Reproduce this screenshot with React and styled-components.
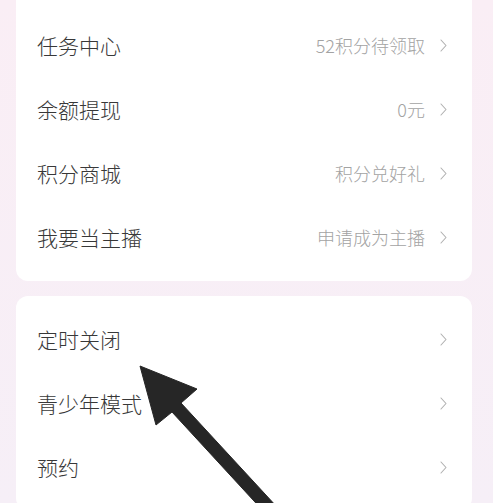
import styled, { createGlobalStyle } from "styled-components";

const Global = createGlobalStyle`
  html, body {
    margin: 0;
    padding: 0;
    height: 100%;
    overflow: hidden;
  }
  body {
    background: linear-gradient(180deg, #faeef5 0%, #f6eff7 100%);
    font-family: "Noto Sans CJK SC", "Noto Sans", sans-serif;
  }
`;

const Screen = styled.div`
  position: relative;
  height: 503px;
  padding: 0 21px 0 16px;
  display: flex;
  flex-direction: column;
  gap: 15px;
`;

const Card = styled.div`
  background: #fff;
  border-radius: 12px;
  padding: ${(p) => (p.$scrolled ? "33px" : "11px")} 0 ${(p) => (p.$scrolled ? "12px" : "11px")};
  margin-top: ${(p) => (p.$scrolled ? "-20px" : "0")};
  display: flex;
  flex-direction: column;
`;

const Row = styled.div`
  height: 64px;
  display: flex;
  align-items: center;
  padding: 0 25px 0 21px;
  cursor: pointer;
`;

const Label = styled.div`
  flex: 1;
  font-size: 21px;
  font-weight: 300;
  color: #383838;
`;

const Hint = styled.div`
  font-size: 18px;
  font-weight: 300;
  color: #a3a3a3;
  margin-right: 15px;
`;

const Chevron = styled.svg`
  width: 7px;
  height: 13px;
  flex: none;
`;

const ArrowLayer = styled.svg`
  position: absolute;
  left: 0;
  top: 0;
  width: 493px;
  height: 503px;
  pointer-events: none;
`;

const sections = [
  [
    { label: "任务中心", hint: "52积分待领取" },
    { label: "余额提现", hint: "0元" },
    { label: "积分商城", hint: "积分兑好礼" },
    { label: "我要当主播", hint: "申请成为主播" },
  ],
  [{ label: "定时关闭" }, { label: "青少年模式" }, { label: "预约" }],
];

function Arrow() {
  return (
    <Chevron viewBox="0 0 7 13">
      <polyline
        points="1,1 6,6.5 1,12"
        fill="none"
        stroke="#b0b0b0"
        strokeWidth="1.1"
        strokeLinecap="round"
        strokeLinejoin="round"
      />
    </Chevron>
  );
}

export default function App() {
  return (
    <>
      <Global />
      <Screen>
        {sections.map((rows, i) => (
          <Card key={i} $scrolled={i === 0}>
            {rows.map((r) => (
              <Row key={r.label}>
                <Label>{r.label}</Label>
                {r.hint && <Hint>{r.hint}</Hint>}
                <Arrow />
              </Row>
            ))}
          </Card>
        ))}
        <ArrowLayer viewBox="0 0 493 503">
          <polygon
            points="140,366 197,389 181,403 289,520 271.5,520 172,412 156,425"
            fill="#262626"
            stroke="#262626"
            strokeWidth="1"
            strokeLinejoin="round"
          />
        </ArrowLayer>
      </Screen>
    </>
  );
}
